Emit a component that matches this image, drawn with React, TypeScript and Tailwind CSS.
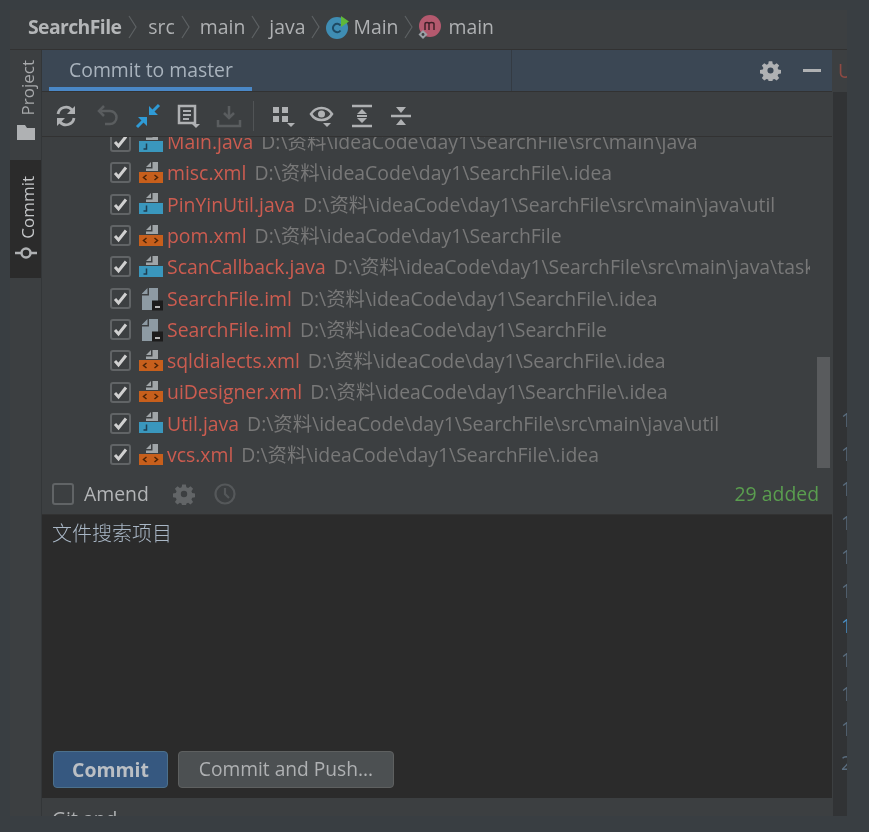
import React from "react";

const files: [string, string, string][] = [
  ["Main.java", "D:\\资料\\ideaCode\\day1\\SearchFile\\src\\main\\java", "java"],
  ["misc.xml", "D:\\资料\\ideaCode\\day1\\SearchFile\\.idea", "xml"],
  ["PinYinUtil.java", "D:\\资料\\ideaCode\\day1\\SearchFile\\src\\main\\java\\util", "java"],
  ["pom.xml", "D:\\资料\\ideaCode\\day1\\SearchFile", "xml"],
  ["ScanCallback.java", "D:\\资料\\ideaCode\\day1\\SearchFile\\src\\main\\java\\task", "java"],
  ["SearchFile.iml", "D:\\资料\\ideaCode\\day1\\SearchFile\\.idea", "iml"],
  ["SearchFile.iml", "D:\\资料\\ideaCode\\day1\\SearchFile", "iml"],
  ["sqldialects.xml", "D:\\资料\\ideaCode\\day1\\SearchFile\\.idea", "xml"],
  ["uiDesigner.xml", "D:\\资料\\ideaCode\\day1\\SearchFile\\.idea", "xml"],
  ["Util.java", "D:\\资料\\ideaCode\\day1\\SearchFile\\src\\main\\java\\util", "java"],
  ["vcs.xml", "D:\\资料\\ideaCode\\day1\\SearchFile\\.idea", "xml"],
];

function FileIcon({ kind }: { kind: string }) {
  if (kind === "iml") {
    return (
      <svg width="26" height="26" viewBox="0 0 26 26" className="shrink-0">
        <path d="M4 8.500L9.500 3V9H4zM11 3h9v22H4V10.500h7z" fill="#8d9aa3" />
        <rect x="14" y="15.500" width="11" height="10" fill="#1c1c1c" />
        <rect x="17" y="21" width="5" height="2" fill="#b5b5b5" />
      </svg>
    );
  }
  const band = kind === "java" ? "#3a97bd" : "#c75f1c";
  return (
    <svg width="26" height="26" viewBox="0 0 26 26" className="shrink-0">
      <path d="M8 7L13 2v5zM14.500 2H20v9H8V8.500h6.500z" fill="#a0a5a8" />
      <rect x="1" y="12" width="24" height="11" fill={band} />
      {kind === "java" ? (
        <path d="M8.500 14.500v5.500H5.500" fill="none" stroke="#1f3f52" strokeWidth="1.500" />
      ) : (
        <path d="M8.500 15l-3 2.500 3 2.500M16.500 15l3 2.500-3 2.500" fill="none" stroke="#4a2408" strokeWidth="1.500" />
      )}
    </svg>
  );
}

function Check() {
  return (
    <div className="w-[21px] h-[21px] shrink-0 rounded-[3px] border-2 border-[#616466] flex items-center justify-center">
      <svg width="15" height="15" viewBox="0 0 15 15">
        <path d="M2 8l3.500 4L13 2.500" fill="none" stroke="#d0d0d0" strokeWidth="3" />
      </svg>
    </div>
  );
}

function Chevron() {
  return (
    <svg width="10" height="24" viewBox="0 0 10 24" className="shrink-0">
      <path d="M1 1l7 11-7 11" fill="none" stroke="#5d6163" strokeWidth="1.200" />
    </svg>
  );
}

function Gear({ size = 22, color = "#afb1b3" }: { size?: number; color?: string }) {
  return (
    <svg width={size} height={size} viewBox="0 0 24 24">
      <path
        fillRule="evenodd"
        fill={color}
        d="M10 1.500h4l.6 3.100 1.900.8 2.600-1.800 2.800 2.800-1.800 2.600.8 1.900 3.100.6v4l-3.100.6-.8 1.900 1.800 2.600-2.800 2.800-2.600-1.800-1.900.8-.6 3.100h-4l-.6-3.100-1.900-.8-2.600 1.800-2.800-2.800 1.800-2.600-.8-1.900-3.100-.6v-4l3.100-.6.8-1.900-1.800-2.600 2.800-2.800 2.600 1.800 1.900-.8zM12 8.500a3.500 3.500 0 1 0 0 7 3.500 3.500 0 0 0 0-7z"
      />
    </svg>
  );
}

function Caret() {
  return <path d="M18 20h8l-4 4z" fill="#afb1b3" />;
}

function ToolBtn({ children, w = 26 }: { children: React.ReactNode; w?: number }) {
  return (
    <svg width={w} height="26" viewBox="0 0 26 26" className="shrink-0 overflow-visible">
      {children}
    </svg>
  );
}

export default function App() {
  return (
    <div
      className="w-[869px] h-[832px] overflow-hidden bg-[#393e42] pt-[10px] pl-[10px] pr-[22px] pb-[16px] text-[19.400px] text-[#afb1b3] blur-[0.4px]"
      style={{ fontFamily: '"Open Sans","Noto Sans","Noto Sans CJK SC",sans-serif' }}
    >
      <div className="h-[806px] w-[837px] flex flex-col bg-[#3c3f41] overflow-hidden">
        {/* breadcrumb */}
        <div className="h-[40px] shrink-0 flex items-center pl-[18px] pb-[6px] border-b border-[#323232] leading-none">
          <span className="font-bold text-[#b4b6b8] tracking-[-0.6px]">SearchFile</span>
          <span className="ml-[7px] mr-[10px]"><Chevron /></span>
          <span>src</span>
          <span className="ml-[6px] mr-[9px]"><Chevron /></span>
          <span>main</span>
          <span className="ml-[6px] mr-[8px]"><Chevron /></span>
          <span>java</span>
          <span className="ml-[6px] mr-[5px]"><Chevron /></span>
          <svg width="24" height="24" viewBox="0 0 24 24" className="shrink-0">
            <circle cx="11" cy="13" r="11" fill="#3f8db3" />
            <path d="M14.500 10.500a4.200 4.200 0 1 0 0 5" fill="none" stroke="#1f4a63" strokeWidth="2" />
            <path d="M15 1v11l8-5.500z" fill="#5fb83a" />
          </svg>
          <span className="ml-[3px]">Main</span>
          <span className="ml-[6px] mr-[4px]"><Chevron /></span>
          <svg width="24" height="24" viewBox="0 0 24 24" className="shrink-0">
            <circle cx="12" cy="11" r="11" fill="#b4596e" />
            <path d="M7 15V9c0-2 4-2 4 0v6m0-6c0-2 5-2 5 0v6" fill="none" stroke="#3f2028" strokeWidth="1.500" />
            <path d="M5 15l4.500 4.500L5 24l-4.500-4.500z" fill="#9aa0a6" />
            <circle cx="5" cy="19.500" r="1.400" fill="#3c3f41" />
          </svg>
          <span className="ml-[6px]">main</span>
        </div>

        <div className="flex-1 flex min-h-0">
          {/* left strip */}
          <div className="w-[32px] shrink-0 flex flex-col border-r border-[#333638]">
            <div className="h-[110px] shrink-0 flex flex-col items-center justify-center gap-[10px] pb-[10px]">
              <span className="[writing-mode:vertical-rl] rotate-180 text-[17px] leading-none text-[#a7a9ab] pr-[3px]">Project</span>
              <svg width="18" height="15" viewBox="0 0 18 15">
                <path d="M0 0h8l2 3h8v12H0z" fill="#afb1b3" />
              </svg>
            </div>
            <div className="h-[118px] shrink-0 bg-[#2b2b2b] flex flex-col items-center justify-center gap-[7px] pb-[2px]">
              <span className="[writing-mode:vertical-rl] rotate-180 text-[17px] leading-none text-[#c4c6c8] pr-[3px]">Commit</span>
              <svg width="22" height="14" viewBox="0 0 22 14">
                <circle cx="11" cy="7" r="4.500" fill="none" stroke="#afb1b3" strokeWidth="2.500" />
                <path d="M0 7h6M16 7h6" stroke="#afb1b3" strokeWidth="2.500" />
              </svg>
            </div>
          </div>

          {/* panel */}
          <div className="w-[790px] shrink-0 flex flex-col min-h-0">
            <div className="h-[42px] shrink-0 bg-[#3b4754] border-b border-[#323232] flex items-center text-[#a9b3bd] relative">
              <div className="w-[203px] h-full ml-[7px] pl-[20px] pt-[6px] border-b-[4px] border-[#4a88c7] leading-[28px] box-border whitespace-nowrap">
                Commit to master
              </div>
              <div className="h-full ml-[259px] w-px bg-[#343b43]" />
              <div className="ml-auto mr-[11px] flex items-center gap-[22px]">
                <Gear size={21} />
                <div className="w-[18px] h-[3px] bg-[#afb1b3]" />
              </div>
            </div>

            {/* toolbar */}
            <div className="h-[45px] shrink-0 flex items-center pl-[11px] pt-[3px] border-b border-[#323232]">
              <div className="flex items-center gap-[14.800px]">
                <ToolBtn>
                  <path d="M5 11a8 8 0 0 1 14-4l2 2M21 15a8 8 0 0 1-14 4l-2-2" fill="none" stroke="#afb1b3" strokeWidth="2.800" />
                  <path d="M22 3v8h-8zM4 23v-8h8z" fill="#afb1b3" />
                </ToolBtn>
                <ToolBtn>
                  <path d="M7 8h9a6 6 0 0 1 0 13h-5" fill="none" stroke="#5a5d5f" strokeWidth="2.500" />
                  <path d="M10 3L5 8l5 5" fill="none" stroke="#5a5d5f" strokeWidth="2.500" />
                </ToolBtn>
                <ToolBtn>
                  <path d="M2 24l8-8M24 2l-8 8" stroke="#2f9bd6" strokeWidth="3" />
                  <path d="M3 14h9v9zM23 12h-9V3z" fill="#2f9bd6" />
                </ToolBtn>
                <ToolBtn>
                  <path d="M4 3h16v17H4z" fill="none" stroke="#afb1b3" strokeWidth="2.500" />
                  <path d="M8 8h8M8 12h8M8 16h6" stroke="#afb1b3" strokeWidth="2" />
                  <path d="M17 21h8l-4 4z" fill="#afb1b3" />
                </ToolBtn>
                <ToolBtn>
                  <path d="M13 3v11M8 10l5 5 5-5" fill="none" stroke="#5a5d5f" strokeWidth="2.500" />
                  <path d="M2 17v6h22v-6" fill="none" stroke="#5a5d5f" strokeWidth="2.500" />
                </ToolBtn>
              </div>
              <div className="w-px h-[30px] bg-[#515456] ml-[11px] mr-[15px]" />
              <div className="flex items-center gap-[13.700px]">
                <ToolBtn>
                  <rect x="4" y="4" width="6" height="6" fill="#afb1b3" />
                  <rect x="13" y="4" width="6" height="6" fill="#afb1b3" />
                  <rect x="4" y="13" width="6" height="6" fill="#afb1b3" />
                  <rect x="13" y="13" width="6" height="6" fill="#afb1b3" />
                  <Caret />
                </ToolBtn>
                <ToolBtn>
                  <path d="M2 11c5-8 16-8 21 0-5 8-16 8-21 0z" fill="none" stroke="#afb1b3" strokeWidth="2.500" />
                  <circle cx="12.500" cy="11" r="3.500" fill="#afb1b3" />
                  <path d="M14 20h8l-4 4z" fill="#afb1b3" />
                </ToolBtn>
                <ToolBtn>
                  <path d="M3 3h20M3 23h20" stroke="#afb1b3" strokeWidth="2.500" />
                  <path d="M13 6l-5 5h10zM13 20l-5-5h10z" fill="#afb1b3" />
                  <rect x="8" y="12" width="10" height="2" fill="#afb1b3" />
                </ToolBtn>
                <ToolBtn>
                  <path d="M3 13h20" stroke="#afb1b3" strokeWidth="2.500" />
                  <path d="M8 4h10l-5 6zM8 22h10l-5-6z" fill="#afb1b3" />
                </ToolBtn>
              </div>
            </div>

            {/* file list */}
            <div className="h-[341px] shrink-0 relative overflow-hidden">
              <div className="-mt-[11px] flex flex-col">
                {files.map(([name, path, kind], i) => (
                  <div key={i} className="h-[31.300px] flex items-center pl-[68px] whitespace-nowrap">
                    <Check />
                    <span className="ml-[7px]"><FileIcon kind={kind} /></span>
                    <span className="ml-[3px] text-[#cc5c50]">{name}</span>
                    <span className="ml-[8px] text-[#787878]">{path}</span>
                  </div>
                ))}
              </div>
              <div className="absolute right-[2px] top-[220px] w-[13px] h-[111px] bg-[#595b5d]" />
              <div className="absolute right-[15px] top-0 bottom-0 w-[7px] bg-[#3c3f41]" />
              <div className="absolute right-0 top-0 bottom-0 w-[2px] bg-[#3c3f41]" />
            </div>

            {/* amend */}
            <div className="h-[37px] shrink-0 flex items-center pl-[10px] pr-[13px] pb-[5px] border-b border-[#323232]">
              <div className="w-[22px] h-[22px] rounded-[3px] border-2 border-[#616466]" />
              <span className="ml-[10px] text-[#b3b5b7]">Amend</span>
              <span className="ml-[24px] flex"><Gear size={22} color="#626567" /></span>
              <svg width="24" height="24" viewBox="0 0 24 24" className="ml-[18px]">
                <circle cx="12" cy="12" r="9.500" fill="none" stroke="#55585a" strokeWidth="2.200" />
                <path d="M12 6v6l4 4" fill="none" stroke="#55585a" strokeWidth="2.200" />
              </svg>
              <span className="ml-auto text-[#5a9e4f]">29 added</span>
            </div>

            {/* message */}
            <div className="h-[283px] shrink-0 bg-[#2b2b2b] flex flex-col justify-between pl-[11px] pr-[10px] pt-[4px] pb-[10px]">
              <div className="text-[20px] leading-[27px] text-[#a9b7c6] -ml-px" style={{ fontFamily: '"Noto Sans CJK SC",sans-serif', fontWeight: 300 }}>文件搜索项目</div>
              <div className="flex gap-[10px]">
                <div className="w-[115px] h-[37px] rounded-[4px] bg-[#365880] border border-[#4c708c] flex items-center justify-center font-bold text-[#bbbfc4]">Commit</div>
                <div className="w-[216px] h-[37px] rounded-[4px] bg-[#4c5052] border border-[#5e6060] flex items-center justify-center text-[#afb1b3] text-[19.200px]">Commit and Push...</div>
              </div>
            </div>

            <div className="flex-1 min-h-0 overflow-hidden pl-[10px] pt-[9px] leading-[24px]">
              <span>Git and</span>
            </div>
          </div>

          {/* right editor edge */}
          <div className="w-[15px] shrink-0 overflow-hidden bg-[#313335] border-l border-[#3c3f41] relative">
            <div className="h-[42px] bg-[#3c3f41] pl-[5px] pt-[7px] text-[#8f4a43] leading-[28px]">U</div>
            <div className="pt-[311px] pl-[8px] flex flex-col text-[#5a6d7f] leading-[34.300px]">
              {["1","1","1","1","1","1"].map((d, i) => <span key={i}>{d}</span>)}
              <span className="text-[#4a90c8]">1</span>
              {["1","1","1"].map((d, i) => <span key={i}>{d}</span>)}
              <span>2</span>
            </div>
          </div>
        </div>
      </div>
    </div>
  );
}
